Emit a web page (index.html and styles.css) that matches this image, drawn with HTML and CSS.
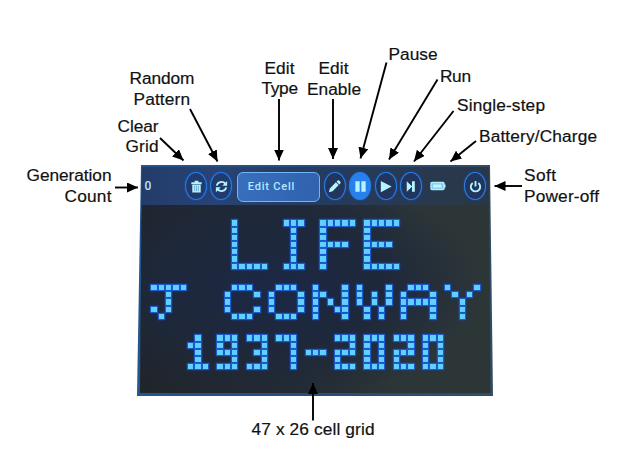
FILE: index.html
```
<!DOCTYPE html>
<html lang="en">
<head>
<meta charset="utf-8">
<title>Life controls</title>
<link rel="stylesheet" href="styles.css">
</head>
<body>
<main class="page">
  <section class="device">
    <div class="toolbar">
      <span class="count">0</span>
      <button class="btn" aria-label="Clear grid"><svg viewBox="0 0 16 16"><path d="M2.500 3.500h11v2h-11zM6 1.800h4V4H6zM3.500 6h9v8.500h-9z"/><path class="cut" d="M6 7v6M8 7v6M10 7v6"/></svg></button>
      <button class="btn" aria-label="Random pattern"><svg viewBox="0 0 16 16"><path class="line" d="M3 7a5 4.500 0 0 1 9-2M13 9a5 4.500 0 0 1-9 2"/><path d="M14 2v5.200H8.800zM2 14V8.800h5.200z"/></svg></button>
      <button class="type">Edit Cell</button>
      <button class="btn" aria-label="Edit enable"><svg viewBox="0 0 16 16"><path d="M2 14l1-4 6.500-6.500 3 3L6 13zM10.200 2.800l1-1c.6-.6 1.400-.5 2 .1l.9.9c.6.600.6 1.400 0 2l-.9 1z"/></svg></button>
      <button class="btn on" aria-label="Pause"><svg viewBox="0 0 16 16"><path d="M2.500 2.500h4.600v11H2.500zM8.900 2.500h4.600v11H8.900z"/></svg></button>
      <button class="btn" aria-label="Run"><svg viewBox="0 0 16 16"><path d="M3 2L14.500 8 3 14z"/></svg></button>
      <button class="btn" aria-label="Single-step"><svg viewBox="0 0 16 16"><path d="M4 2.500L9.800 8 4 13.500zM9.600 2.500h3v11h-3z"/></svg></button>
      <svg class="battery" viewBox="0 0 16 10"><rect x="1" y="1.500" width="13" height="7" rx="1"/><path class="full" d="M3 3.500h8l1 3H3zM14 3.500h1.500v3H14z"/></svg>
      <button class="btn power" aria-label="Power off"><svg viewBox="0 0 16 16"><path class="line" d="M5 4.200a5 5 0 1 0 6 0M8 2v6"/></svg></button>
    </div>
    <div class="cells" id="cells"></div>
  </section>
  <svg class="notes" viewBox="0 0 640 463">
    <defs>
      <marker id="head" viewBox="0 0 11 10" refX="11" refY="5" markerWidth="11" markerHeight="10" markerUnits="userSpaceOnUse" orient="auto"><path d="M0 0L11 5 0 10z"/></marker>
    </defs>
    <g class="arrows">
      <path d="M190 109L217.500 161.500"/><path d="M160 138L183.500 160.500"/><path d="M115 187.500H138"/>
      <path d="M279 99V160.500"/><path d="M333 99V159"/><path d="M386.500 62.500L360.500 158.500"/>
      <path d="M437.500 79.500L389 159.500"/><path d="M453.500 111L414 161.500"/><path d="M476 141L450.500 161.500"/>
      <path d="M522 186H494.500"/><path d="M313 420.500V383"/>
    </g>
    <text x="129.500" y="84" textLength="65">Random</text>
    <text x="133.500" y="105" textLength="56.500">Pattern</text>
    <text x="117.500" y="131.500" textLength="41">Clear</text>
    <text x="125.500" y="152.300" textLength="33">Grid</text>
    <text x="26.500" y="181.300" textLength="85">Generation</text>
    <text x="64.500" y="202.300" textLength="47">Count</text>
    <text x="264.500" y="73.500" textLength="30">Edit</text>
    <text x="261.500" y="94.300" textLength="36.500">Type</text>
    <text x="318.500" y="74" textLength="30">Edit</text>
    <text x="307" y="95" textLength="54">Enable</text>
    <text x="388.500" y="60" textLength="49">Pause</text>
    <text x="440" y="82" textLength="31">Run</text>
    <text x="457" y="111" textLength="88">Single-step</text>
    <text x="479" y="142" textLength="118">Battery/Charge</text>
    <text x="524" y="181.300" textLength="32">Soft</text>
    <text x="524" y="202.300" textLength="75">Power-off</text>
    <text x="251.500" y="435" textLength="123">47 x 26 cell grid</text>
  </svg>
</main>
<script src="cells.js"></script>
</body>
</html>
```

FILE: styles.css
```
* { box-sizing: border-box; }
body { margin: 0; background: #fff; }
.page {
  position: relative;
  width: 640px;
  height: 463px;
  padding: 165px 0 0 137px;
  overflow: hidden;
}
.device {
  width: 357px;
  height: 231px;
  padding: 2px 5px 0 6px;
  background: linear-gradient(90deg, #24558c, #284d7b 50%, #304c67);
  clip-path: polygon(4px 0, 353px 0, 356px 100%, 0 100%);
  position: relative;
  isolation: isolate;
}
.device::before {
  content: "";
  position: absolute;
  z-index: -1;
  inset: 0;
  background:
    linear-gradient(90deg, #223b69, #284374 22%, #253c61 45%, #2a3745 100%) top / 100% 40px no-repeat,
    radial-gradient(ellipse at 38% 52%, #1c2845 0, #1e283b 35%, transparent 68%),
    linear-gradient(90deg, #20252b, #242b34 45%, #2d3637 75%);
  clip-path: polygon(5px 2px, 352px 2px, 353.500px 228px, 3px 228px);
}
.toolbar {
  display: flex;
  align-items: center;
  height: 38px;
}
.count {
  flex: none;
  width: 42px;
  padding-left: 1.500px;
  color: #b8e6ff;
  font: 500 12px "Roboto", sans-serif;
  line-height: 38px;
}
.btn {
  display: flex;
  align-items: center;
  justify-content: center;
  flex: none;
  width: 22px;
  height: 28px;
  margin-right: 3.400px;
  padding: 0;
  border: 1.500px solid #277de8;
  border-radius: 50%;
  background: #213b6f;
  box-shadow: 0 0 2px #165bd0;
}
.type ~ .btn:not(.on) { background: #22355c; }
.btn svg { flex: none; width: 15px; height: 15px; fill: #b5f3ff; }
.btn .line { fill: none; stroke: #b5f3ff; stroke-width: 2; }
.btn .cut { stroke: #4e8dc0; stroke-width: .7; }
.btn.on { background: #2880ec; }
.type {
  flex: none;
  width: 83px;
  height: 30px;
  margin: 1px 4px 0 1px;
  padding: 0 0 0 10px;
  border: 1.500px solid #72b5fa;
  border-radius: 6px;
  background: linear-gradient(100deg, #396fbd, #3062ad);
  color: #b1e9ff;
  font: 500 11px "Roboto", sans-serif;
  letter-spacing: .8px;
  text-align: left;
}
.battery { flex: none; width: 16px; height: 10px; margin: 0 18px 0 5px; fill: #80c9ed; stroke: #b0edff; stroke-width: 1.400; }
.battery .full { fill: #c0f5ff; stroke: none; }
.power { margin-right: 0; }
.cells {
  display: grid;
  grid-template-columns: repeat(47, 7.350px);
  grid-template-rows: repeat(26, 7.190px);
}
.alive {
  border: .700px solid #1d5cc8;
  background: #5fd0ff;
  background-clip: padding-box;
  box-shadow: 0 0 2px #174bd0;
}
.notes { position: absolute; left: 0; top: 0; width: 640px; height: 463px; }
.notes text { font: 17.300px "Liberation Sans", Arial, sans-serif; fill: #111; stroke: #111; stroke-width: .2px; }
.arrows { stroke: #000; stroke-width: 1.900; fill: none; }
.arrows path { marker-end: url(#head); }
#head path { fill: #000; stroke: none; }
```

FILE: cells.js
```
// Live cells, one string per grid row; rows that are not listed are empty.
const rows = {
  2: "............#......###..#####.#####",
  3: "............#.......#...#.....#",
  4: "............#.......#...#.....#",
  5: "............#.......#...####..####",
  6: "............#.......#...#.....#",
  7: "............#.......#...#.....#",
  8: "............#####..###..#.....#####",
  11: ".#####......###...###..#...#.#...#..###..#...#",
  12: "...#.......#...#.#...#.##..#.#.#.#.#...#..#.#",
  13: "...#.......#.....#...#.#.#.#.#.#.#.#####...#",
  14: ".#.#.......#...#.#...#.#..##..#.#..#...#...#",
  15: "..#.........###...###..#...#..#.#..#...#...#",
  18: ".......#..###.###.###.....###.###.###.###",
  19: "......##..#.#...#...#.......#.#.#...#.#.#",
  20: ".......#..###..##...#.###.###.#.#.###.#.#",
  21: ".......#....#...#...#.....#...#.#.#...#.#",
  22: "......###.###.###...#.....###.###.###.###"
};
const box = document.getElementById("cells");
for (let y = 0; y < 26; y++) {
  const row = rows[y] || "";
  for (let x = 0; x < 47; x++) {
    const cell = document.createElement("i");
    if (row[x] === "#") cell.className = "alive";
    box.appendChild(cell);
  }
}
```
